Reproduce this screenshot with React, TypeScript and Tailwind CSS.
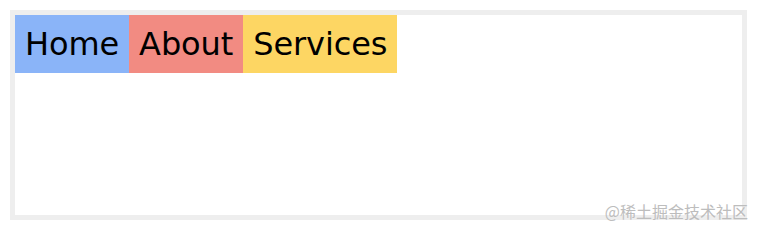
export default function App() {
  const items = [
    { label: 'Home', color: 'bg-[#8ab4f8]' },
    { label: 'About', color: 'bg-[#f28b82]' },
    { label: 'Services', color: 'bg-[#fdd663]' },
  ];

  return (
    <div className="relative w-[757px] h-[230px] bg-white p-[10px] font-['DejaVu_Sans',sans-serif]">
      <div className="h-[210px] border-[5px] border-[#eeeeee]">
        <ul className="flex">
          {items.map((item) => (
            <li key={item.label} className={`${item.color} p-[10px] text-[32px] leading-[38px] text-black tracking-[-0.1px]`}>
              {item.label}
            </li>
          ))}
        </ul>
      </div>
      <span className="absolute right-[9px] bottom-[9px] text-[16px] leading-[20px] text-[#bdbdbd] font-['Noto_Sans_CJK_SC',sans-serif]">
        @稀土掘金技术社区
      </span>
    </div>
  );
}
